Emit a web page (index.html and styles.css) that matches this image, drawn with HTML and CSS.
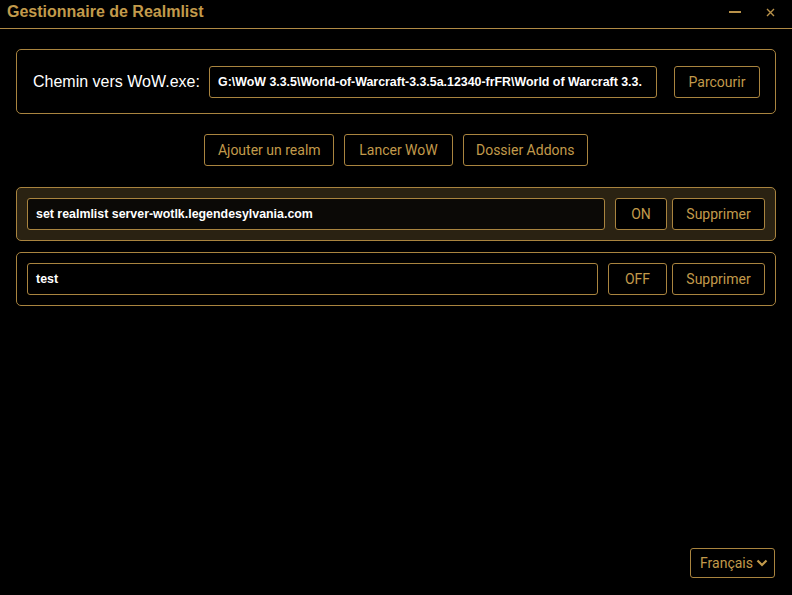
FILE: index.html
```html
<!DOCTYPE html>
<html lang="fr">
<head>
<meta charset="utf-8">
<title>Gestionnaire de Realmlist</title>
<link rel="stylesheet" href="styles.css">
</head>
<body>
<div class="app">
  <header class="titlebar">
    <span class="title">Gestionnaire de Realmlist</span>
    <div class="winctl">
      <span class="ctl min"><svg width="12" height="4" viewBox="0 0 12 4"><rect x="0" y="1" width="12" height="2" fill="#b9924a"/></svg></span>
      <span class="ctl close"><svg width="9" height="9" viewBox="0 0 9 9"><path d="M1 1L8 8M8 1L1 8" stroke="#b9924a" stroke-width="1.4"/></svg></span>
    </div>
  </header>
  <main class="content">
    <section class="panel path-panel">
      <label class="path-label">Chemin vers WoW.exe:</label>
      <div class="field path-field">G:\WoW 3.3.5\World-of-Warcraft-3.3.5a.12340-frFR\World of Warcraft 3.3.</div>
      <button class="btn">Parcourir</button>
    </section>
    <div class="actions">
      <button class="btn">Ajouter un realm</button>
      <button class="btn">Lancer WoW</button>
      <button class="btn">Dossier Addons</button>
    </div>
    <section class="panel realm active">
      <div class="field realm-field">set realmlist server-wotlk.legendesylvania.com</div>
      <button class="btn toggle on">ON</button>
      <button class="btn">Supprimer</button>
    </section>
    <section class="panel realm">
      <div class="field realm-field">test</div>
      <button class="btn toggle off">OFF</button>
      <button class="btn">Supprimer</button>
    </section>
  </main>
  <footer class="footer">
    <div class="select">Français <svg width="12" height="8" viewBox="0 0 12 8"><path d="M1.5 1.5L6 6L10.5 1.5" fill="none" stroke="#c29a4b" stroke-width="2.2"/></svg></div>
  </footer>
</div>
</body>
</html>
```
FILE: styles.css
```css
html, body {
  margin: 0;
  padding: 0;
  background: #000;
}
body {
  font-family: "Liberation Sans", Arial, sans-serif;
  color: #fff;
}
.app {
  height: 595px;
  display: flex;
  flex-direction: column;
}
.titlebar {
  height: 28px;
  border-bottom: 1px solid #b08a45;
  display: flex;
  align-items: center;
  justify-content: space-between;
  padding: 0 0 0 7px;
  box-sizing: content-box;
}
.title {
  font-weight: bold;
  font-size: 16px;
  color: #c29a4b;
  position: relative;
  top: -2px;
}
.winctl {
  display: flex;
  align-items: center;
  gap: 25px;
  padding-right: 17px;
}
.ctl {
  display: flex;
  align-items: center;
}
.min { position: relative; top: -2px; }
.close { position: relative; top: -2px; }
.content {
  padding: 20px 16px 0 16px;
  display: flex;
  flex-direction: column;
}
.panel {
  border: 1px solid #a9843f;
  border-radius: 5px;
  display: flex;
  align-items: center;
  box-sizing: border-box;
}
.path-panel {
  height: 65px;
  padding: 0 15px 0 16px;
}
.path-label {
  font-size: 16px;
  color: #fff;
  width: 176px;
  flex: none;
  white-space: nowrap;
}
.field {
  height: 32px;
  border: 1px solid #a9843f;
  border-radius: 3px;
  box-sizing: border-box;
  font-size: 12.4px;
  font-weight: bold;
  color: #fff;
  display: flex;
  align-items: center;
  padding: 0 8px;
  white-space: nowrap;
  overflow: hidden;
  background: #000;
}
.path-field {
  width: 448px;
  flex: none;
  margin-right: 17px;
}
.btn {
  height: 32px;
  box-sizing: border-box;
  border: 1px solid #a9843f;
  border-radius: 3px;
  background: #000;
  color: #c29a4b;
  font-family: Roboto, "Liberation Sans", sans-serif;
  font-size: 14px;
  padding: 0 15px;
  cursor: pointer;
}
.path-panel .btn { width: 86px; padding: 0; }
.actions {
  display: flex;
  justify-content: center;
  gap: 10px;
  margin: 20px 0 21px;
}
.actions .btn { padding: 0 14px; }
.actions .btn:first-child { width: 130px; padding: 0; }
.actions .btn:last-child { width: 125px; padding: 0; }
.realm {
  height: 54px;
  padding: 0 10px;
  margin-bottom: 11px;
}
.realm.active {
  background: #2a2212;
}
.realm.active .field {
  background: #0b0906;
}
.realm-field {
  flex: 1;
  margin-right: 10px;
}
.toggle {
  padding: 0;
  margin-right: 5px;
}
.toggle.on { width: 52px; }
.toggle.off { width: 59px; }
.realm .btn:last-child { width: 93px; padding: 0; }
.footer {
  margin-top: auto;
  display: flex;
  justify-content: flex-end;
  padding: 0 17px 17px 0;
}
.select {
  width: 85px;
  height: 30px;
  box-sizing: border-box;
  border: 1px solid #a9843f;
  border-radius: 3px;
  color: #c29a4b;
  font-family: Roboto, "Liberation Sans", sans-serif;
  font-size: 14px;
  display: flex;
  align-items: center;
  justify-content: space-between;
  padding: 0 6px 0 9px;
}
```
